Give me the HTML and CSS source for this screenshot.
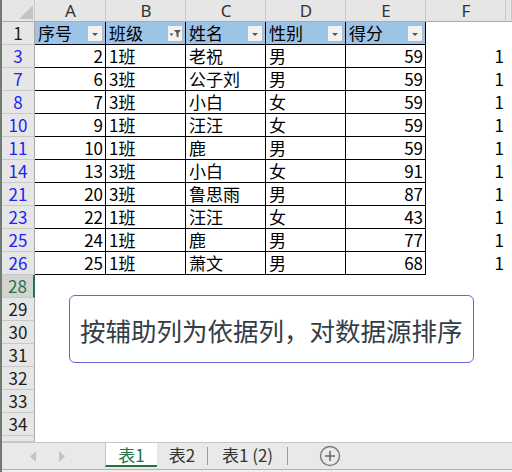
FILE: index.html
```html
<!DOCTYPE html>
<html lang="zh">
<head>
<meta charset="utf-8">
<link rel="stylesheet" href="styles.css">
</head>
<body>
<div class="app">
  <div class="sheet">
    <div class="c corner"><svg width="33" height="21" viewBox="0 0 33 21"><polygon points="31,5 31,19 17,19" fill="#c4c4c4"/></svg></div>
    <div class="c ch">A</div><div class="c ch">B</div><div class="c ch">C</div><div class="c ch">D</div><div class="c ch">E</div><div class="c ch">F</div><div class="c ch"></div>

    <div class="c rh">1</div>
    <div class="c d hd"><span>序号</span><span class="fb"><svg width="14" height="15" viewBox="0 0 14 15"><polygon points="4,7 10,7 7,10" fill="#555"/></svg></span></div>
    <div class="c d hd"><span>班级</span><span class="fb"><svg width="14" height="15" viewBox="0 0 14 15"><polygon points="1.5,7.5 5.5,7.5 3.5,10" fill="#555"/><path d="M6 4 H13 L10.5 7 V11.5 L8.5 10.5 V7 Z" fill="#555"/></svg></span></div>
    <div class="c d hd"><span>姓名</span><span class="fb"><svg width="14" height="15" viewBox="0 0 14 15"><polygon points="4,7 10,7 7,10" fill="#555"/></svg></span></div>
    <div class="c d hd"><span>性别</span><span class="fb"><svg width="14" height="15" viewBox="0 0 14 15"><polygon points="4,7 10,7 7,10" fill="#555"/></svg></span></div>
    <div class="c d hd"><span>得分</span><span class="fb"><svg width="14" height="15" viewBox="0 0 14 15"><polygon points="4,7 10,7 7,10" fill="#555"/></svg></span></div>
    <div class="c"></div><div class="c"></div>

    <div class="c rh f">3</div><div class="c d r">2</div><div class="c d">1班</div><div class="c d">老祝</div><div class="c d">男</div><div class="c d r">59</div><div class="c r">1</div><div class="c"></div>
    <div class="c rh f">7</div><div class="c d r">6</div><div class="c d">3班</div><div class="c d">公子刘</div><div class="c d">男</div><div class="c d r">59</div><div class="c r">1</div><div class="c"></div>
    <div class="c rh f">8</div><div class="c d r">7</div><div class="c d">3班</div><div class="c d">小白</div><div class="c d">女</div><div class="c d r">59</div><div class="c r">1</div><div class="c"></div>
    <div class="c rh f">10</div><div class="c d r">9</div><div class="c d">1班</div><div class="c d">汪汪</div><div class="c d">女</div><div class="c d r">59</div><div class="c r">1</div><div class="c"></div>
    <div class="c rh f">11</div><div class="c d r">10</div><div class="c d">1班</div><div class="c d">鹿</div><div class="c d">男</div><div class="c d r">59</div><div class="c r">1</div><div class="c"></div>
    <div class="c rh f">14</div><div class="c d r">13</div><div class="c d">3班</div><div class="c d">小白</div><div class="c d">女</div><div class="c d r">91</div><div class="c r">1</div><div class="c"></div>
    <div class="c rh f">21</div><div class="c d r">20</div><div class="c d">3班</div><div class="c d">鲁思雨</div><div class="c d">男</div><div class="c d r">87</div><div class="c r">1</div><div class="c"></div>
    <div class="c rh f">23</div><div class="c d r">22</div><div class="c d">1班</div><div class="c d">汪汪</div><div class="c d">女</div><div class="c d r">43</div><div class="c r">1</div><div class="c"></div>
    <div class="c rh f">25</div><div class="c d r">24</div><div class="c d">1班</div><div class="c d">鹿</div><div class="c d">男</div><div class="c d r">77</div><div class="c r">1</div><div class="c"></div>
    <div class="c rh f">26</div><div class="c d r">25</div><div class="c d">1班</div><div class="c d">萧文</div><div class="c d">男</div><div class="c d r">68</div><div class="c r">1</div><div class="c"></div>

    <div class="c rh act">28</div><div class="c e"></div><div class="c e"></div><div class="c e"></div><div class="c e"></div><div class="c e"></div><div class="c e"></div><div class="c e"></div>
    <div class="c rh">29</div><div class="c e"></div><div class="c e"></div><div class="c e"></div><div class="c e"></div><div class="c e"></div><div class="c e"></div><div class="c e"></div>
    <div class="c rh">30</div><div class="c e"></div><div class="c e"></div><div class="c e"></div><div class="c e"></div><div class="c e"></div><div class="c e"></div><div class="c e"></div>
    <div class="c rh">31</div><div class="c e"></div><div class="c e"></div><div class="c e"></div><div class="c e"></div><div class="c e"></div><div class="c e"></div><div class="c e"></div>
    <div class="c rh">32</div><div class="c e"></div><div class="c e"></div><div class="c e"></div><div class="c e"></div><div class="c e"></div><div class="c e"></div><div class="c e"></div>
    <div class="c rh">33</div><div class="c e"></div><div class="c e"></div><div class="c e"></div><div class="c e"></div><div class="c e"></div><div class="c e"></div><div class="c e"></div>
    <div class="c rh">34</div><div class="c e"></div><div class="c e"></div><div class="c e"></div><div class="c e"></div><div class="c e"></div><div class="c e"></div><div class="c e"></div>
    <div class="c rh clip"></div><div class="c e"></div><div class="c e"></div><div class="c e"></div><div class="c e"></div><div class="c e"></div><div class="c e"></div><div class="c e"></div>

    <div class="callout">按辅助列为依据列，对数据源排序</div>
  </div>
  <div class="tabs">
    <div class="nav">
      <svg width="7" height="11" viewBox="0 0 7 11"><polygon points="6,0 6,11 0,5.5" fill="#c4c4c4"/></svg>
      <svg width="7" height="11" viewBox="0 0 7 11"><polygon points="1,0 1,11 7,5.5" fill="#c4c4c4"/></svg>
    </div>
    <div class="tab active">表1</div>
    <div class="tab t2">表2</div>
    <div class="sep"></div>
    <div class="tab t3">表1 (2)</div>
    <div class="sep"></div>
    <div class="add"><svg width="22" height="22" viewBox="0 0 22 22"><circle cx="11" cy="11" r="9.5" fill="none" stroke="#7a7a7a" stroke-width="1.4"/><path d="M11 6 V16 M6 11 H16" stroke="#6a6a6a" stroke-width="1.6"/></svg></div>
  </div>
  <div class="foot"></div>
</div>
</body>
</html>
```
FILE: styles.css
```css
html, body {
  margin: 0;
  padding: 0;
}
body {
  width: 512px;
  height: 472px;
  overflow: hidden;
  background: #fff;
  font-family: "Noto Sans CJK SC", "Noto Sans", sans-serif;
  color: #000;
}
.app {
  height: 472px;
  border-left: 2px solid #6f7a72;
  box-sizing: border-box;
  display: flex;
  flex-direction: column;
}
.sheet {
  position: relative;
  display: grid;
  grid-template-columns: 33px 71px 80px 80px 80px 80px 80px 1fr;
  grid-template-rows: 22px repeat(18, 23px) 6px;
}
.c {
  box-sizing: border-box;
  font-size: 17px;
  line-height: 22px;
  white-space: nowrap;
  padding: 0 2px 0 3px;
}
.clip { overflow: hidden; }
.corner {
  background: #e6e6e6;
  border-right: 1px solid #c9c9c9;
  border-bottom: 1px solid #ababab;
  padding: 0;
}
.corner svg { display: block; }
.ch {
  background: #e6e6e6;
  border-right: 1px solid #c9c9c9;
  border-bottom: 1px solid #ababab;
  text-align: center;
  color: #333;
  font-family: "Noto Sans", sans-serif;
  font-size: 17px;
  line-height: 22px;
}
.rh {
  background: #e6e6e6;
  border-right: 1px solid #ababab;
  border-bottom: 1px solid #c9c9c9;
  text-align: center;
  color: #1c1c1c;
  padding: 0;
}
.rh.f { color: #2323f0; }
.rh.act {
  background: #d3d3d3;
  color: #217346;
  border-right: 2px solid #217346;
}
.d {
  border-right: 1px solid #000;
  border-bottom: 1px solid #000;
}
.r { text-align: right; }
.hd {
  background: #9dc3e6;
  display: flex;
  align-items: center;
  padding-right: 2px;
}
.fb {
  margin-left: auto;
  width: 16px;
  height: 17px;
  box-sizing: border-box;
  background: #f2f2f2;
  border: 1px solid #b9b9b9;
  display: flex;
  align-items: center;
  justify-content: center;
}
.fb svg { display: block; }
.callout {
  position: absolute;
  left: 67px;
  top: 295px;
  width: 405px;
  height: 68px;
  box-sizing: border-box;
  border: 1.5px solid #6565d6;
  border-radius: 6px;
  background: #fff;
  display: flex;
  align-items: center;
  padding-left: 10px;
  font-size: 25.5px;
  color: #333d47;
  white-space: nowrap;
}
.tabs {
  height: 28px;
  box-sizing: border-box;
  background: #e9e9e9;
  border-top: 1px solid #c6c6c6;
  border-bottom: 1px solid #b3b3b3;
  display: flex;
  align-items: stretch;
}
.nav {
  width: 103px;
  display: flex;
  align-items: center;
  gap: 21px;
  padding-left: 28px;
  box-sizing: border-box;
}
.nav svg { display: block; }
.tab {
  font-size: 17px;
  line-height: 24px;
  text-align: center;
  color: #333;
}
.tab.active {
  width: 52px;
  background: #fff;
  color: #217346;
  border-left: 1px solid #c6c6c6;
  border-bottom: 2px solid #217346;
  margin-bottom: 2px;
  box-sizing: border-box;
}
.t2 { width: 50px; }
.t3 { width: 79px; }
.sep {
  width: 1px;
  background: #9a9a9a;
  margin: 4px 0 4px;
}
.add {
  margin-left: 31px;
  display: flex;
  align-items: center;
}
.add svg { display: block; }
.foot {
  flex: 1;
  background: #efefef;
}
```
